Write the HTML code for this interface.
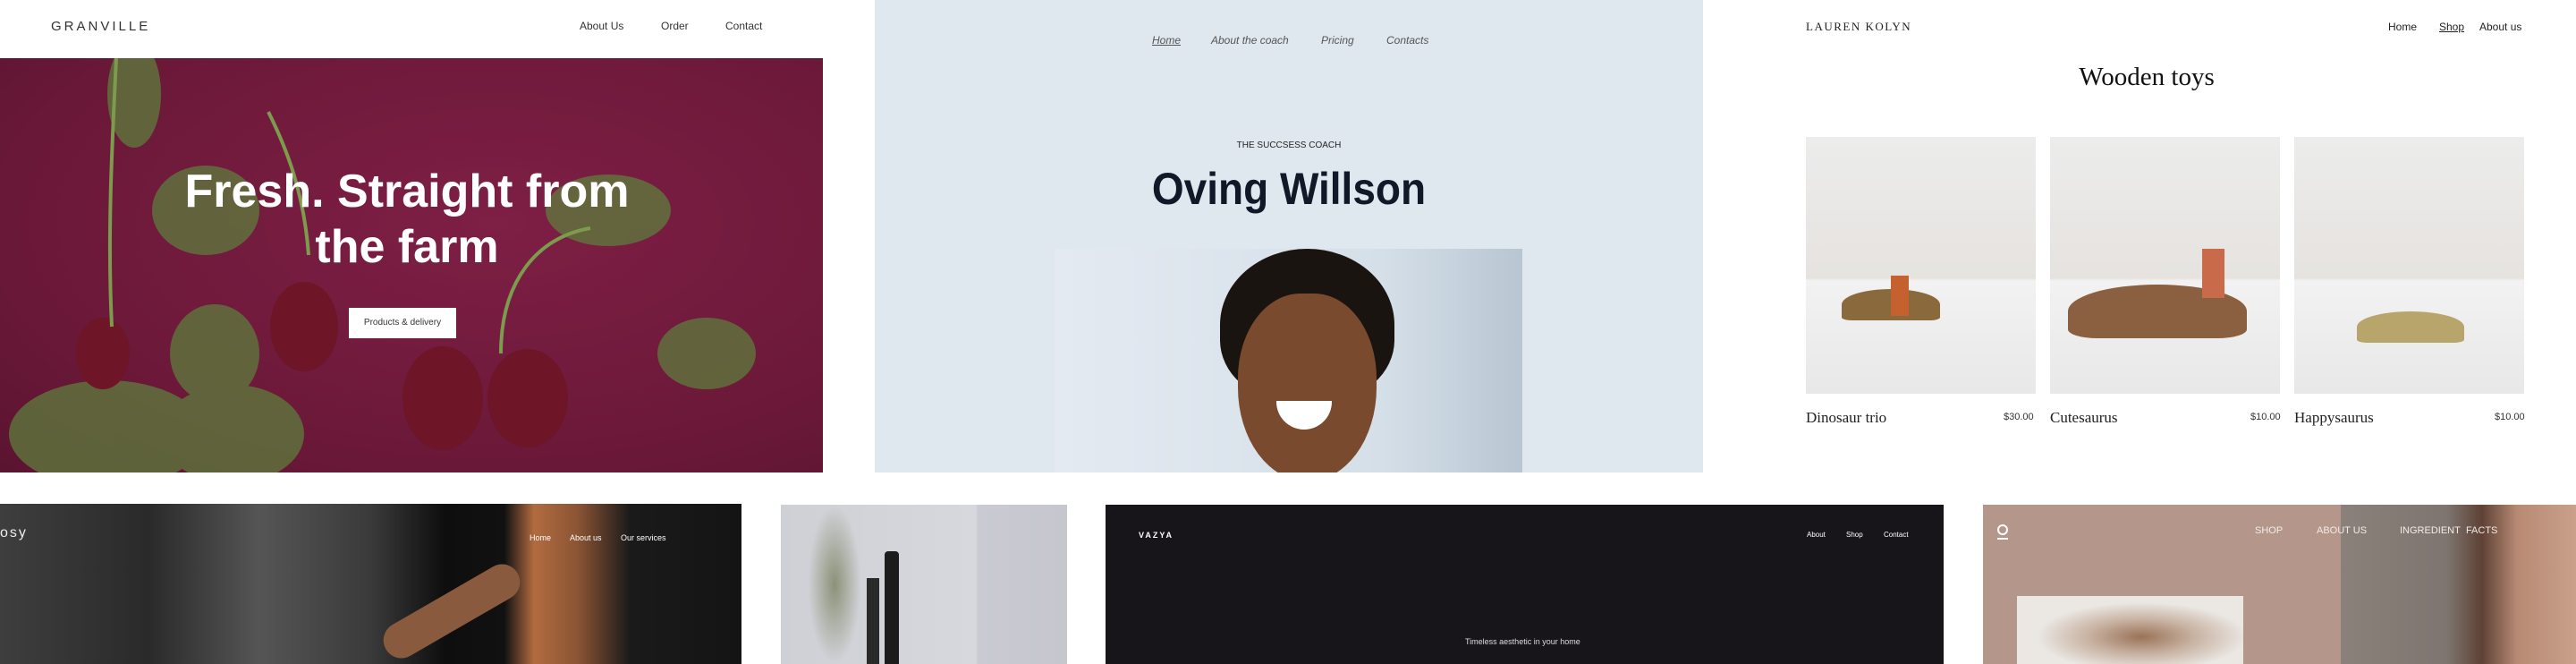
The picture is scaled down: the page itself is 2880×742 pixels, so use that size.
<!DOCTYPE html>
<html><head><meta charset="utf-8"><style>
*{margin:0;padding:0;box-sizing:border-box}
body{width:2880px;height:742px;background:#fff;position:relative;overflow:hidden;font-family:"Liberation Sans",sans-serif}
.a{position:absolute;white-space:nowrap}
</style></head><body>
<!-- Panel 1 -->
<div class="a" style="left:57px;top:21px;font-size:15px;letter-spacing:3px;color:#333">GRANVILLE</div>
<div class="a" style="left:648px;top:22px;font-size:12px;color:#333">About Us</div>
<div class="a" style="left:739px;top:22px;font-size:12px;color:#333">Order</div>
<div class="a" style="left:811px;top:22px;font-size:12px;color:#333">Contact</div>
<div class="a" style="left:0;top:65px;width:920px;height:463px;background:radial-gradient(ellipse at 60% 40%,#7e1f45,#6a1838 70%,#5a1430);overflow:hidden">
 <svg width="920" height="463" style="position:absolute;left:0;top:0">
  <g fill="#5d7c3c" opacity=".75">
   <ellipse cx="150" cy="40" rx="30" ry="60"/><ellipse cx="230" cy="170" rx="60" ry="50"/>
   <ellipse cx="120" cy="420" rx="110" ry="60"/><ellipse cx="260" cy="420" rx="80" ry="55"/>
   <ellipse cx="680" cy="170" rx="70" ry="40"/><ellipse cx="790" cy="330" rx="55" ry="40"/>
   <ellipse cx="240" cy="330" rx="50" ry="55"/>
  </g>
  <g fill="#6e1528">
   <ellipse cx="115" cy="330" rx="30" ry="40"/><ellipse cx="340" cy="300" rx="38" ry="50"/>
   <ellipse cx="495" cy="380" rx="45" ry="58"/><ellipse cx="590" cy="380" rx="45" ry="55"/>
  </g>
  <g stroke="#7d9b4c" stroke-width="4" fill="none">
   <path d="M130 0 C125 100 120 200 125 300"/><path d="M345 220 C340 150 320 100 300 60"/>
   <path d="M560 330 C560 250 600 200 660 190"/>
  </g>
 </svg>
 <div class="a" style="left:0;width:910px;top:118px;text-align:center;font-size:52px;font-weight:bold;color:#fff;line-height:62px;white-space:normal">Fresh. Straight from<br>the farm</div>
 <div class="a" style="left:390px;top:279px;width:120px;height:34px;background:#fff;color:#333;font-size:10px;text-align:center;line-height:34px">Products &amp; delivery</div>
</div>
<!-- Panel 2 -->
<div class="a" style="left:978px;top:0;width:926px;height:528px;background:#dfe8ef">
 <div class="a" style="left:310px;top:38px;font-size:12px;font-style:italic;color:#555;text-decoration:underline">Home</div>
 <div class="a" style="left:376px;top:38px;font-size:12px;font-style:italic;color:#555">About the coach</div>
 <div class="a" style="left:499px;top:38px;font-size:12px;font-style:italic;color:#555">Pricing</div>
 <div class="a" style="left:572px;top:38px;font-size:12px;font-style:italic;color:#555">Contacts</div>
 <div class="a" style="left:0;width:926px;top:157px;text-align:center;font-size:10px;color:#222">THE SUCCSESS COACH</div>
 <div class="a" style="left:0;width:926px;top:182px;text-align:center;font-size:50px;font-weight:bold;color:#111827;transform:scaleX(.92)">Oving Willson</div>
 <div class="a" style="left:201px;top:278px;width:523px;height:250px;background:linear-gradient(90deg,#e4eaf2,#d5dfe8 70%,#b8c6d2);overflow:hidden">
  <div class="a" style="left:185px;top:0;width:195px;height:170px;border-radius:50% 50% 40% 40%;background:#1a1410"></div>
  <div class="a" style="left:205px;top:50px;width:155px;height:210px;border-radius:45% 45% 50% 50%;background:#7a4a2e"></div>
  <div class="a" style="left:248px;top:170px;width:62px;height:32px;border-radius:0 0 32px 32px;background:#fff"></div>
 </div>
</div>
<!-- Panel 3 -->
<div class="a" style="left:2019px;top:22px;font-family:'Liberation Serif',serif;font-size:13px;letter-spacing:1.5px;color:#222">LAUREN KOLYN</div>
<div class="a" style="left:2670px;top:23px;font-size:12px;color:#222">Home</div>
<div class="a" style="left:2727px;top:23px;font-size:12px;color:#222;text-decoration:underline">Shop</div>
<div class="a" style="left:2772px;top:23px;font-size:12px;color:#222">About us</div>
<div class="a" style="left:1920px;width:960px;top:70px;text-align:center;font-family:'Liberation Serif',serif;font-size:29px;color:#111">Wooden toys</div>
<div class="a" style="left:2019px;top:153px;width:257px;height:287px;background:linear-gradient(180deg,#ececec 0%,#e6e3df 55%,#f2f2f2 56%,#e8e8e8)">
 <div class="a" style="left:40px;top:170px;width:110px;height:35px;background:#8a6a3c;border-radius:50% 50% 10% 10%"></div><div class="a" style="left:95px;top:155px;width:20px;height:45px;background:#c4612f"></div></div>
<div class="a" style="left:2292px;top:153px;width:257px;height:287px;background:linear-gradient(180deg,#ececec 0%,#e6e3df 55%,#f2f2f2 56%,#e8e8e8)">
 <div class="a" style="left:20px;top:165px;width:200px;height:60px;background:#8a6040;border-radius:60% 60% 20% 20%"></div><div class="a" style="left:170px;top:125px;width:25px;height:55px;background:#c96a4a"></div></div>
<div class="a" style="left:2565px;top:153px;width:257px;height:287px;background:linear-gradient(180deg,#ececec 0%,#e6e3df 55%,#f2f2f2 56%,#e8e8e8)">
 <div class="a" style="left:70px;top:195px;width:120px;height:35px;background:#b8a56c;border-radius:50% 50% 10% 10%"></div></div>
<div class="a" style="left:2019px;top:457px;font-family:'Liberation Serif',serif;font-size:17px;color:#222">Dinosaur trio</div>
<div class="a" style="left:2240px;top:460px;font-size:11px;color:#333">$30.00</div>
<div class="a" style="left:2292px;top:457px;font-family:'Liberation Serif',serif;font-size:17px;color:#222">Cutesaurus</div>
<div class="a" style="left:2516px;top:460px;font-size:11px;color:#333">$10.00</div>
<div class="a" style="left:2565px;top:457px;font-family:'Liberation Serif',serif;font-size:17px;color:#222">Happysaurus</div>
<div class="a" style="left:2789px;top:460px;font-size:11px;color:#333">$10.00</div>
<!-- Bottom A -->
<div class="a" style="left:0;top:563px;width:829px;height:179px;background:linear-gradient(90deg,#3e3e3e 0%,#2a2a2a 20%,#555 35%,#3a3a3a 50%,#0e0e0e 60%,#111 68%,#b26b40 72%,#8a5434 78%,#1a1a1a 85%,#141414);overflow:hidden">
 <div class="a" style="left:0;top:24px;font-size:16px;color:#eee;letter-spacing:2px">osy</div>
 <div class="a" style="left:592px;top:33px;font-size:9px;color:#fff">Home</div>
 <div class="a" style="left:637px;top:33px;font-size:9px;color:#fff">About us</div>
 <div class="a" style="left:694px;top:33px;font-size:9px;color:#fff">Our services</div>
 <div class="a" style="left:420px;top:100px;width:170px;height:40px;background:#8a5a3e;transform:rotate(-30deg);border-radius:20px"></div>
</div>
<!-- Bottom B -->
<div class="a" style="left:873px;top:564px;width:320px;height:178px;background:linear-gradient(90deg,#cfd0d6 0%,#d7d8dd 68%,#c9cad2 69%,#c5c6ce)">
 <div class="a" style="left:30px;top:0;width:60px;height:178px;background:radial-gradient(ellipse,#8b9278 0%,transparent 70%)"></div>
 <div class="a" style="left:96px;top:82px;width:14px;height:96px;background:#2a2a2a"></div>
 <div class="a" style="left:116px;top:52px;width:16px;height:126px;background:#1c1c1c;border-radius:4px 4px 0 0"></div>
</div>
<!-- Bottom C -->
<div class="a" style="left:1236px;top:564px;width:937px;height:178px;background:#17151a">
 <div class="a" style="left:37px;top:29px;font-size:9px;font-weight:bold;letter-spacing:2px;color:#fff">VAZYA</div>
 <div class="a" style="left:784px;top:29px;font-size:8px;color:#fff">About</div>
 <div class="a" style="left:828px;top:29px;font-size:8px;color:#fff">Shop</div>
 <div class="a" style="left:870px;top:29px;font-size:8px;color:#fff">Contact</div>
 <div class="a" style="left:402px;top:148px;font-size:9px;color:#ddd">Timeless aesthetic in your home</div>
</div>
<!-- Bottom D -->
<div class="a" style="left:2217px;top:564px;width:663px;height:178px;background:#b5968b;overflow:hidden">
 <div class="a" style="left:400px;top:0;width:263px;height:178px;background:linear-gradient(90deg,#8a817a,#7e7570 45%,#5e4235 60%,#b88a74 75%,#c9a08a)"></div>
 <div class="a" style="left:16px;top:22px;width:12px;height:12px;border:2px solid #fff;border-radius:50%"></div>
 <div class="a" style="left:16px;top:37px;width:12px;height:2px;background:#fff"></div>
 <div class="a" style="left:304px;top:23px;font-size:11px;color:#f2ebe7">SHOP</div>
 <div class="a" style="left:373px;top:23px;font-size:11px;color:#f2ebe7">ABOUT US</div>
 <div class="a" style="left:466px;top:23px;font-size:11px;color:#f2ebe7">INGREDIENT&nbsp; FACTS</div>
 <div class="a" style="left:38px;top:102px;width:253px;height:76px;background:radial-gradient(ellipse at 55% 60%,#9a7358 0%,#c8b2a2 30%,#ebe8e4 60%)"></div>
</div>
</body></html>
